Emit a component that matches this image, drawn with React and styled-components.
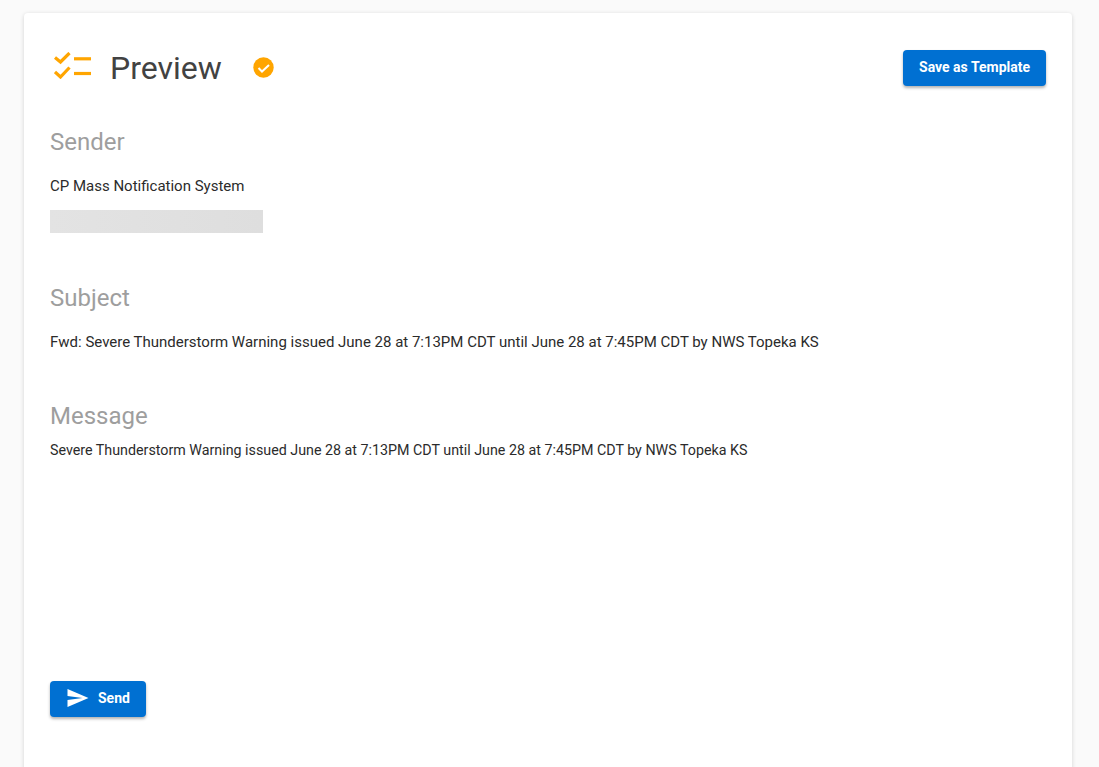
import React from 'react';
import styled, { createGlobalStyle } from 'styled-components';

const GlobalStyle = createGlobalStyle`
html, body {
  margin: 0;
  height: 100%;
  overflow: hidden;
  background: #fafafa;
  font-family: Roboto, "Liberation Sans", sans-serif;
}
`

const Page = styled.div`
height: 767px;
padding: 13px 27px 0 24px;
box-sizing: border-box;
overflow: hidden;
`

const Card = styled.main`
background: white;
border-radius: 4px;
box-shadow: 0 1px 4px rgba(0, 0, 0, .16);
padding: 37px 26px 0;
height: 800px;
box-sizing: border-box;
`

const Header = styled.div`
display: flex;
align-items: center;
justify-content: space-between;
height: 36px;
`

const TitleGroup = styled.div`
display: flex;
align-items: center;
padding-left: 4px;
margin-bottom: 2px;
`

const Title = styled.h1`
margin: 2px 31px 0 19px;
font-size: 32px;
font-weight: 400;
color: #424242;
line-height: 37px;
`

const Button = styled.button`
display: flex;
align-items: center;
height: 36px;
padding: ${props => (props.$icon ? '0 16px 2px 17px' : '0 16px 2px')};
gap: 9px;
border: none;
border-radius: 4px;
background: #0070d2;
color: white;
font-family: Roboto, sans-serif;
font-size: 14px;
font-weight: 700;
box-shadow: 0 2px 3px rgba(0, 0, 0, .3);
`

const SectionTitle = styled.h2`
margin: ${props => props.$top}px 0 0;
font-size: 24px;
font-weight: 400;
line-height: 28px;
color: #9e9e9e;
`

const Line = styled.p`
margin: ${props => props.$top}px 0 0;
font-size: ${props => props.$size || 15}px;
line-height: 20px;
color: #2b2b2b;
`

const Redacted = styled.div`
width: 213px;
height: 23px;
margin-top: 14px;
background: linear-gradient(90deg, #e3e3e3, #dedede);
`

const Footer = styled.div`
margin-top: 221px;
display: flex;
`

const ChecklistSvg = styled.svg`
margin-bottom: 4px;
`

const ChecklistIcon = () => (
    <ChecklistSvg width="37" height="27" viewBox="0 0 37 27" fill="none" stroke="#ffa500" strokeWidth="3.2">
        <path d="M1 5.500l5.500 4.500 9-9" />
        <path d="M1 20l5.500 5 9-9.500" />
        <path d="M20 6.800h17" />
        <path d="M20 21.500h17" />
    </ChecklistSvg>
)

const CheckBadge = () => (
    <svg width="21" height="21" viewBox="0 0 21 21" fill="none">
        <circle cx="10.500" cy="10.500" r="10.200" fill="#ffa500" />
        <path d="M5.500 11l3.500 3.500 7-6.500" stroke="white" strokeWidth="2" />
    </svg>
)

const SendIcon = () => (
    <svg width="22" height="18" viewBox="2 3 21 18" fill="white">
        <path d="M2.010 21L23 12 2.010 3 2 10l15 2-15 2z" />
    </svg>
)

const App = () => (
    <Page>
        <GlobalStyle />
        <Card>
            <Header>
                <TitleGroup>
                    <ChecklistIcon />
                    <Title>Preview</Title>
                    <CheckBadge />
                </TitleGroup>
                <Button>Save as Template</Button>
            </Header>
            <SectionTitle $top={42}>Sender</SectionTitle>
            <Line $top={20}>CP Mass Notification System</Line>
            <Redacted />
            <SectionTitle $top={51}>Subject</SectionTitle>
            <Line $top={20}>Fwd: Severe Thunderstorm Warning issued June 28 at 7:13PM CDT until June 28 at 7:45PM CDT by NWS Topeka KS</Line>
            <SectionTitle $top={50}>Message</SectionTitle>
            <Line $top={10} $size={14.27}>Severe Thunderstorm Warning issued June 28 at 7:13PM CDT until June 28 at 7:45PM CDT by NWS Topeka KS</Line>
            <Footer>
                <Button $icon><SendIcon />Send</Button>
            </Footer>
        </Card>
    </Page>
)

export default App;
